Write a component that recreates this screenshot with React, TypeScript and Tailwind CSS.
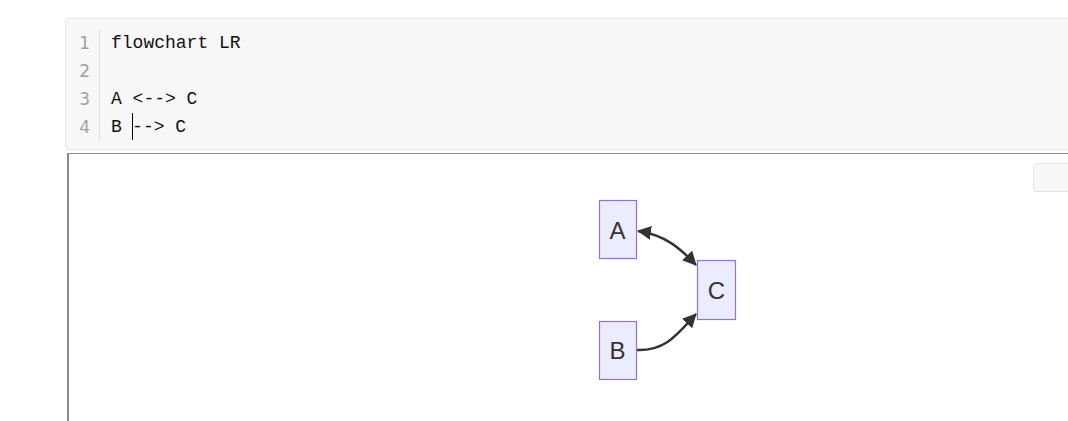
import React from 'react';

const LINES = ['flowchart LR', '', 'A <--> C', 'B --> C'];

function Diagram() {
  return (
    <svg width="140" height="186" viewBox="0 0 140 186" className="block -translate-x-[1px]">
      <defs>
        <marker id="arr" viewBox="0 0 14 14" refX="13" refY="7" markerWidth="14" markerHeight="14" markerUnits="userSpaceOnUse" orient="auto-start-reverse">
          <path d="M0 0 L14 7 L0 14 Z" fill="#333" />
        </marker>
      </defs>
      <path d="M41 33 C 68 37, 83 50, 99 67" fill="none" stroke="#333" strokeWidth="2.4" markerStart="url(#arr)" markerEnd="url(#arr)" />
      <path d="M40 152 C 70 153, 82 134, 99 116" fill="none" stroke="#333" strokeWidth="2.4" markerEnd="url(#arr)" />
      <rect x="2.5" y="2.5" width="37" height="58" fill="#ECECFF" stroke="#9370DB" strokeWidth="1.2" />
      <rect x="100.5" y="62.5" width="38" height="59" fill="#ECECFF" stroke="#9370DB" strokeWidth="1.2" />
      <rect x="2.5" y="123.5" width="37" height="58" fill="#ECECFF" stroke="#9370DB" strokeWidth="1.2" />
      <g fontFamily="'Liberation Sans', Arial, sans-serif" fontSize="24" fill="#333" textAnchor="middle">
        <text x="20.5" y="41">A</text>
        <text x="119.5" y="101">C</text>
        <text x="20.5" y="161">B</text>
      </g>
    </svg>
  );
}

export default function App() {
  return (
    <div className="w-screen h-screen overflow-hidden bg-white">
      <div className="pl-[65px] pt-[18px] w-[1300px]">
        {/* editor */}
        <div className="w-[1200px] bg-[#f7f7f7] border border-[#e6e6e6] rounded-[3px] pt-[10px] pb-[8px] flex font-['Liberation_Mono',monospace] text-[18px]">
          <div className="w-[34px] border-r border-[#dcdcdc] pr-[9px] text-right text-[#a0a0a0] font-['DejaVu_Sans',sans-serif] text-[17px]">
            {LINES.map((_, i) => (
              <div key={i} className="h-[28px] leading-[28px]">{i + 1}</div>
            ))}
          </div>
          <div className="pl-[11px] text-[#111]">
            {LINES.map((l, i) => (
              <div key={i} className="h-[28px] leading-[28px] whitespace-pre relative">
                {i === 3 ? (
                  <>
                    B <span className="inline-block w-[1.5px] h-[27px] bg-black align-middle -mx-[1px] -mt-[2px]" />--&gt; C
                  </>
                ) : l || ' '}
              </div>
            ))}
          </div>
        </div>
        {/* preview */}
        <div className="relative mt-[3px] ml-[2px] w-[1200px] h-[300px] border-l-2 border-t border-[#8a8a8a] bg-white flex justify-center pt-[44px]">
          <Diagram />
          <div className="absolute left-[964px] top-[9px] w-[80px] h-[29px] rounded-[4px] border border-[#e3e3e3] bg-[#f8f8f8]" />
        </div>
      </div>
    </div>
  );
}
